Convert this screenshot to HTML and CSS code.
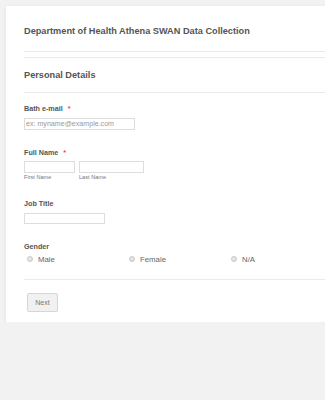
FILE: index.html
```html
<!DOCTYPE html>
<html lang="en">
<head>
    <meta charset="UTF-8">
    <meta name="viewport" content="width=device-width, initial-scale=1.0">
    <title>Department of Health Athena SWAN Data Collection</title>
    <link rel="stylesheet" href="styles.css">
</head>
<body>

    <div class="form-card">
        <div class="form-header">
            <h1>Department of Health Athena SWAN Data Collection</h1>
        </div>
        <div class="section-head">
            <h2>Personal Details</h2>
        </div>

        <form id="swanForm">
            <div class="field field-first">
                <label for="email">Bath e-mail <span class="required">*</span></label>
                <input type="email" id="email" class="input-email" placeholder="ex: myname@example.com">
            </div>
            <div class="field">
                <label>Full Name <span class="required">*</span></label>
                <div class="name-row">
                    <div class="name-part">
                        <input type="text" id="firstName" class="input-first">
                        <span class="sublabel">First Name</span>
                    </div>
                    <div class="name-part">
                        <input type="text" id="lastName" class="input-last">
                        <span class="sublabel">Last Name</span>
                    </div>
                </div>
            </div>
            <div class="field">
                <label for="jobTitle">Job Title</label>
                <input type="text" id="jobTitle" class="input-job">
            </div>
            <div class="field">
                <label>Gender</label>
                <div class="radio-row">
                    <div class="radio-option"><span class="radio"></span>Male</div>
                    <div class="radio-option"><span class="radio"></span>Female</div>
                    <div class="radio-option"><span class="radio"></span>N/A</div>
                </div>
            </div>
            <div class="form-footer">
                <button type="button">Next</button>
            </div>
        </form>
    </div>

</body>
</html>
```

FILE: styles.css
```css
html, body {
    overflow: hidden;
}
body {
    margin: 0;
    background-color: #f2f2f2;
    font-family: "Liberation Sans", Arial, sans-serif;
}
.form-card {
    margin: 6px 0 0 6px;
    background: white;
    box-shadow: 0 1px 3px rgba(0, 0, 0, 0.08);
    padding-bottom: 10px;
}
.form-header {
    margin-left: 18px;
    padding: 19px 0 14px;
    border-bottom: 1px solid #ebebeb;
}
h1, h2 {
    margin: 0;
    font-size: 9.2px;
    line-height: 12px;
    font-weight: bold;
    color: #555;
}
.section-head {
    margin: 5px 0 0 18px;
    padding: 11px 0;
    border-top: 1px solid #ebebeb;
    border-bottom: 1px solid #ebebeb;
}
.field {
    margin: 18px 0 0 18px;
}
.field-first {
    margin-top: 11px;
}
label {
    display: block;
    font-size: 7.2px;
    line-height: 10px;
    font-weight: bold;
    color: #555;
}
.required {
    color: #e44;
    margin-left: 3px;
}
input {
    display: block;
    box-sizing: border-box;
    height: 12px;
    margin: 4px 0 0;
    padding: 0 1px;
    border: 1px solid #ddd;
    font-family: inherit;
    font-size: 7.1px;
    color: #555;
}
input::placeholder {
    color: #999;
}
.input-email {
    width: 111px;
}
.input-first {
    width: 51px;
}
.input-last {
    width: 65px;
}
.input-job {
    width: 81px;
    height: 11px;
}
.name-row {
    display: flex;
    gap: 4px;
}
.name-row input {
    margin-top: 3px;
}
.sublabel {
    display: block;
    margin-top: 1px;
    font-size: 5.6px;
    line-height: 7px;
    color: #777;
}
.radio-row {
    display: flex;
    margin-top: 2px;
}
.radio-option {
    display: flex;
    align-items: center;
    flex-shrink: 0;
    width: 102px;
    height: 10px;
    font-size: 7.8px;
    color: #666;
}
.radio {
    width: 6px;
    height: 6px;
    margin: 0 5px 0 3px;
    box-sizing: border-box;
    border-radius: 50%;
    border: 1px solid #c8c8c8;
    background: radial-gradient(circle at 40% 40%, #eee, #d4d4d4);
}
.form-footer {
    margin: 15px 0 0 18px;
    padding: 11px 0 0 3px;
    border-top: 1px solid #ebebeb;
}
button {
    width: 31px;
    height: 19px;
    padding: 0;
    background-color: #f1f1f1;
    border: 1px solid #d6d6d6;
    border-radius: 2px;
    font-family: inherit;
    font-size: 7px;
    color: #777;
    cursor: pointer;
}
```
